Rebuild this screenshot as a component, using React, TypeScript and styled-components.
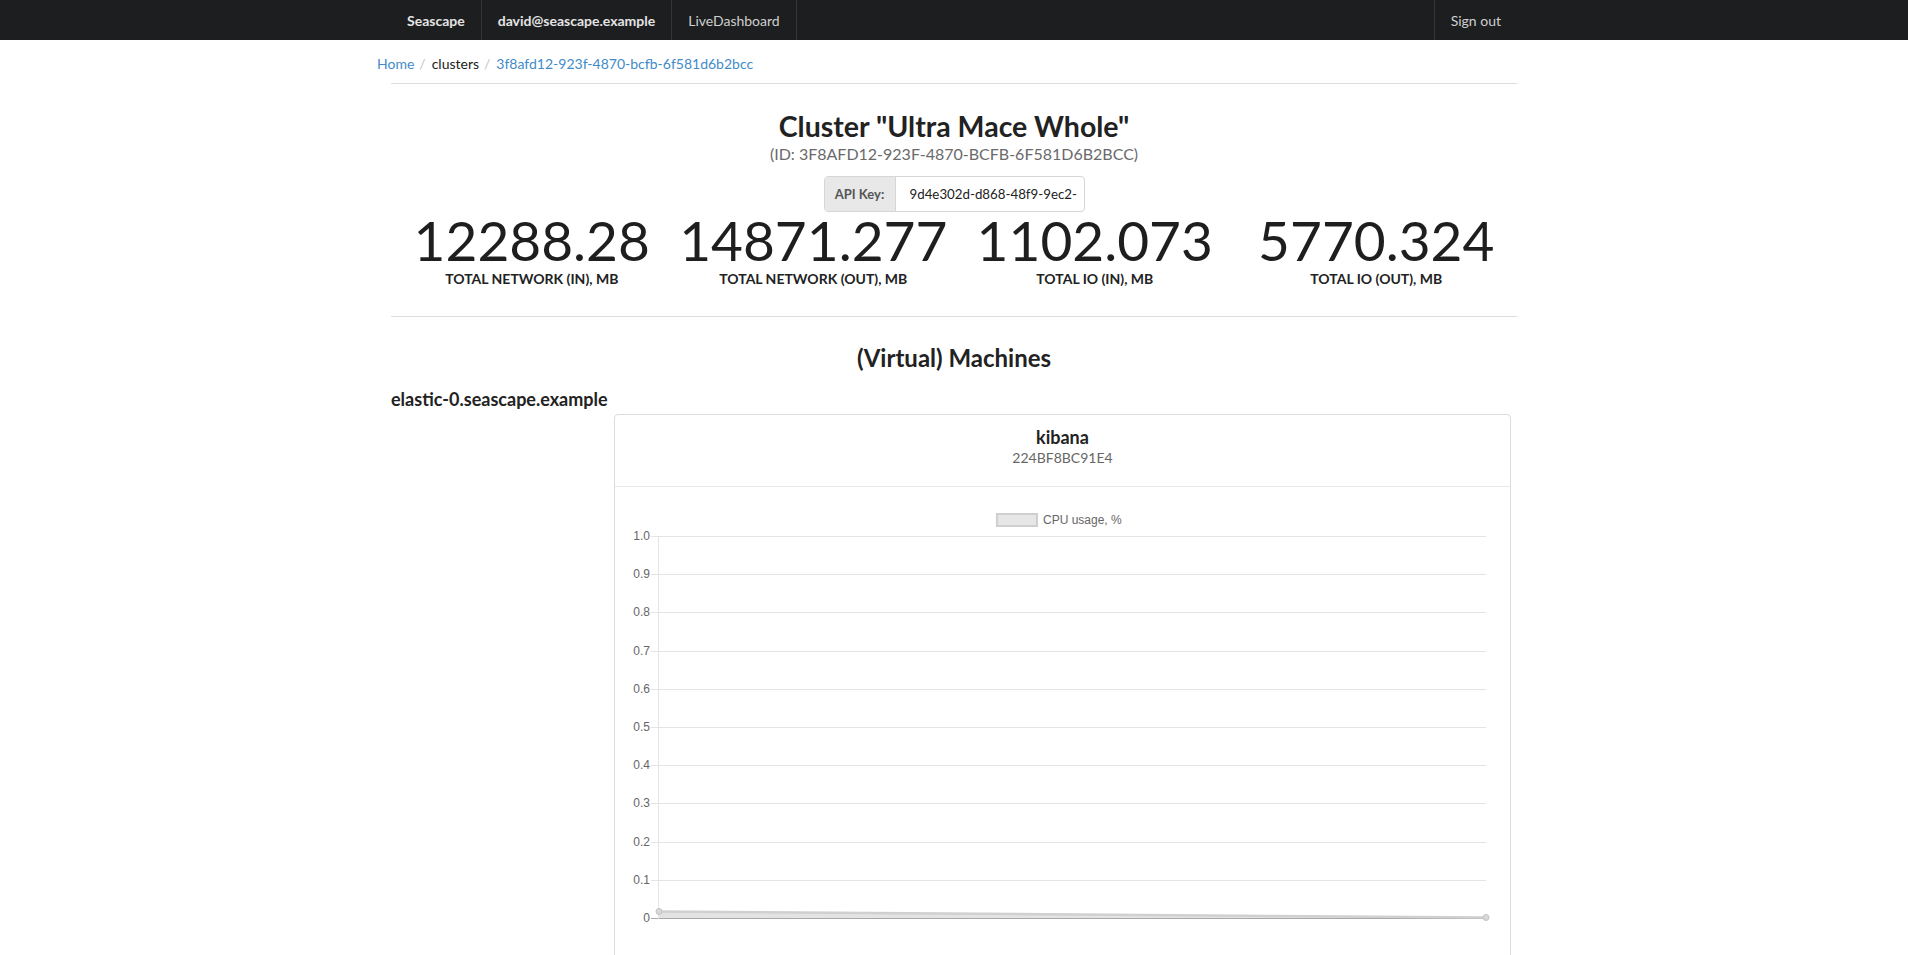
import React from "react";
import styled, { createGlobalStyle } from "styled-components";

const GlobalStyle = createGlobalStyle`
  html, body { margin: 0; padding: 0; background: #ffffff; }
  body {
    font-family: Lato, "Open Sans", "Liberation Sans", sans-serif;
    color: #222222;
    font-size: 14px;
  }
  * { box-sizing: border-box; }
`;

const Nav = styled.nav`
  height: 40px;
  background: #1d1e20;
`;

const NavInner = styled.div`
  width: 1126px;
  margin: 0 auto;
  height: 40px;
  display: flex;
  justify-content: space-between;
`;

const NavGroup = styled.div`
  display: flex;
  height: 100%;
`;

const NavItem = styled.a<{ $bold?: boolean; $divider?: "left" | "right" }>`
  display: flex;
  align-items: center;
  height: 100%;
  padding: 0 16px;
  font-size: 14px;
  font-weight: ${(p) => (p.$bold ? 700 : 400)};
  color: ${(p) => (p.$bold ? "#e4e4e4" : "#cfcfcf")};
  text-decoration: none;
  border-right: ${(p) => (p.$divider === "right" ? "1px solid #343537" : "none")};
  border-left: ${(p) => (p.$divider === "left" ? "1px solid #343537" : "none")};
  white-space: nowrap;
`;

const Container = styled.main`
  width: 1126px;
  margin: 0 auto;
`;

const Breadcrumb = styled.ol`
  list-style: none;
  margin: 0 0 0 -14px;
  padding: 14px 0 0;
  display: flex;
  font-size: 14px;
  line-height: 20px;
`;

const Crumb = styled.li<{ $link?: boolean }>`
  color: ${(p) => (p.$link ? "#428bca" : "#222")};
  &:not(:first-child)::before {
    content: "/";
    color: #c4c4c4;
    padding: 0 6px 0 5px;
  }
`;

const Rule = styled.hr<{ $top: number }>`
  border: 0;
  border-top: 1px solid #dddddd;
  margin: ${(p) => p.$top}px 0 0;
`;

const ClusterHeader = styled.section`
  display: flex;
  flex-direction: column;
  align-items: center;
  margin-top: 25px;
`;

const Title = styled.h1`
  margin: 0;
  font-size: 28.5px;
  line-height: 34px;
  font-weight: 700;
  color: #222;
`;

const SubTitle = styled.div`
  margin-top: 0;
  font-size: 16px;
  line-height: 22px;
  color: #6a6a6a;
`;

const KeyGroup = styled.div`
  margin-top: 11px;
  display: flex;
  height: 36px;
  border: 1px solid #d6d6d6;
  border-radius: 4px;
  overflow: hidden;
`;

const KeyAddon = styled.span`
  display: flex;
  align-items: center;
  width: 71px;
  justify-content: center;
  background: #e8e8e8;
  border-right: 1px solid #d6d6d6;
  font-size: 13px;
  font-weight: 700;
  color: #555;
`;

const KeyValue = styled.span`
  display: flex;
  align-items: center;
  width: 188px;
  padding-left: 14px;
  white-space: nowrap;
  font-size: 13.3px;
  color: #222;
`;

const Stats = styled.section`
  display: grid;
  grid-template-columns: repeat(4, 1fr);
  text-align: center;
`;

const Stat = styled.div`
  display: flex;
  flex-direction: column;
  align-items: center;
`;

const StatValue = styled.div`
  font-size: 55px;
  line-height: 57px;
  font-weight: 400;
  color: #1e1e1e;
`;

const StatLabel = styled.div`
  font-size: 14px;
  line-height: 20px;
  font-weight: 700;
  color: #222;
  text-transform: uppercase;
`;

const SectionTitle = styled.h2`
  margin: 26px 0 0;
  text-align: center;
  font-size: 24px;
  line-height: 30px;
  font-weight: 700;
  color: #222;
`;

const HostName = styled.h3`
  margin: 14px 0 0;
  font-size: 18px;
  line-height: 24px;
  font-weight: 700;
  color: #222;
`;

const Card = styled.article`
  margin: 3px 6px 0 223px;
  border: 1px solid #dcdcdc;
  border-radius: 4px;
  background: #fff;
`;

const CardHeader = styled.header`
  display: flex;
  flex-direction: column;
  align-items: center;
  padding: 11px 0 18px;
  border-bottom: 1px solid #e8e8e8;
`;

const CardTitle = styled.div`
  font-size: 18px;
  line-height: 22px;
  font-weight: 700;
  color: #222;
`;

const CardSub = styled.div`
  font-size: 14px;
  line-height: 20px;
  color: #666;
`;

const ChartWrap = styled.div`
  display: block;
  height: 520px;
`;

const ChartSvg = styled.svg`
  display: block;
  font-family: "Liberation Sans", Arial, Helvetica, sans-serif;
`;

const stats = [
  { value: "12288.28", label: "Total network (in), MB" },
  { value: "14871.277", label: "Total network (out), MB" },
  { value: "1102.073", label: "Total IO (in), MB" },
  { value: "5770.324", label: "Total IO (out), MB" },
];

const CpuChart: React.FC = () => {
  const top = 49;
  const step = 38.2;
  const axisX = 43;
  const left = 36;
  const right = 871;
  const ticks = [1.0, 0.9, 0.8, 0.7, 0.6, 0.5, 0.4, 0.3, 0.2, 0.1, 0];
  const zeroY = top + step * 10;
  const p1 = { x: axisX + 1, y: zeroY - 6.5 };
  const p2 = { x: right, y: zeroY - 0.5 };
  return (
    <ChartSvg width={895} height={520} viewBox="0 0 895 520">
      <rect x={382} y={27} width={40} height={12} fill="#e6e6e6" stroke="#cfcfcf" strokeWidth={2} />
      <text x={428} y={37} fontSize={12} fill="#666">
        CPU usage, %
      </text>
      {ticks.map((t, i) => {
        const y = Math.round(top + step * i);
        const isZero = t === 0;
        return (
          <g key={t}>
            <line
              x1={left}
              x2={right}
              y1={y + 0.5}
              y2={y + 0.5}
              stroke={isZero ? "#a8a8a8" : "#e4e4e4"}
              strokeWidth={1}
            />
            <text x={35} y={y + 4} fontSize={12} fill="#666" textAnchor="end">
              {t === 1 ? "1.0" : t === 0 ? "0" : t.toFixed(1)}
            </text>
          </g>
        );
      })}
      <line x1={axisX + 0.5} x2={axisX + 0.5} y1={top} y2={zeroY + 1} stroke="#e4e4e4" />
      <polygon
        points={`${p1.x},${p1.y} ${p2.x},${p2.y} ${p2.x},${zeroY} ${p1.x},${zeroY}`}
        fill="#e3e3e3"
      />
      <line x1={p1.x} y1={p1.y} x2={p2.x} y2={p2.y} stroke="#d0d0d0" strokeWidth={2.5} />
      <circle cx={p1.x} cy={p1.y} r={3} fill="#d8d8d8" stroke="#c4c4c4" />
      <circle cx={p2.x} cy={p2.y} r={3} fill="#d8d8d8" stroke="#c4c4c4" />
    </ChartSvg>
  );
};

export default function App() {
  return (
    <>
      <GlobalStyle />
      <Nav>
        <NavInner>
          <NavGroup>
            <NavItem $bold $divider="right">Seascape</NavItem>
            <NavItem $bold $divider="right">david@seascape.example</NavItem>
            <NavItem $divider="right">LiveDashboard</NavItem>
          </NavGroup>
          <NavGroup>
            <NavItem $divider="left">Sign out</NavItem>
          </NavGroup>
        </NavInner>
      </Nav>
      <Container>
        <Breadcrumb>
          <Crumb $link>Home</Crumb>
          <Crumb>clusters</Crumb>
          <Crumb $link>3f8afd12-923f-4870-bcfb-6f581d6b2bcc</Crumb>
        </Breadcrumb>
        <Rule $top={9} />
        <ClusterHeader>
          <Title>Cluster "Ultra Mace Whole"</Title>
          <SubTitle>(ID: 3F8AFD12-923F-4870-BCFB-6F581D6B2BCC)</SubTitle>
          <KeyGroup>
            <KeyAddon>API Key:</KeyAddon>
            <KeyValue>9d4e302d-d868-48f9-9ec2-</KeyValue>
          </KeyGroup>
        </ClusterHeader>
        <Stats>
          {stats.map((s) => (
            <Stat key={s.label}>
              <StatValue>{s.value}</StatValue>
              <StatLabel>{s.label}</StatLabel>
            </Stat>
          ))}
        </Stats>
        <Rule $top={27} />
        <SectionTitle>(Virtual) Machines</SectionTitle>
        <HostName>elastic-0.seascape.example</HostName>
        <Card>
          <CardHeader>
            <CardTitle>kibana</CardTitle>
            <CardSub>224BF8BC91E4</CardSub>
          </CardHeader>
          <ChartWrap>
            <CpuChart />
          </ChartWrap>
        </Card>
      </Container>
    </>
  );
}
